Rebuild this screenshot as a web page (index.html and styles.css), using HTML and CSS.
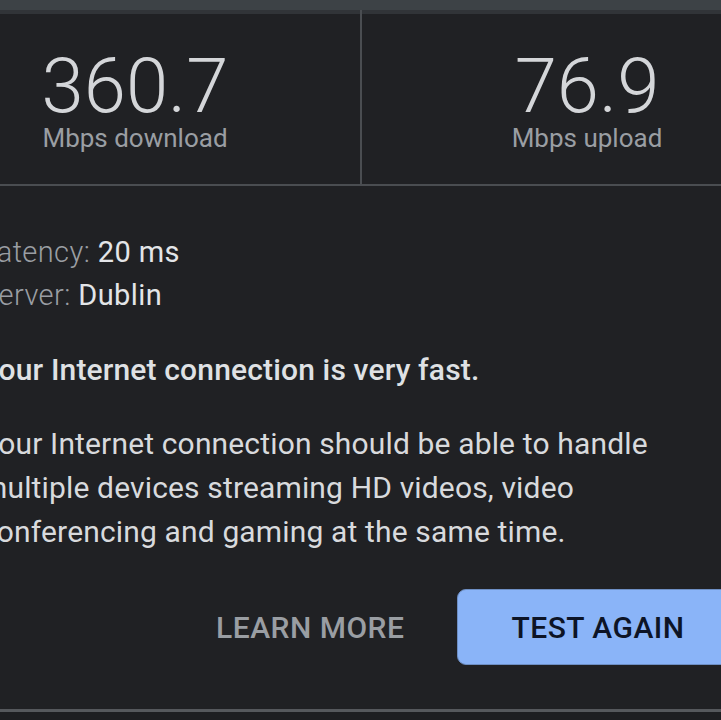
FILE: index.html
```html
<!DOCTYPE html>
<html lang="en">
<head>
<meta charset="utf-8">
<title>Speed test</title>
<link rel="stylesheet" href="styles.css">
</head>
<body>
<div class="topbar"></div>
<div class="card">
  <div class="stats">
    <div class="stat">
      <div class="value">360.7</div>
      <div class="unit">Mbps download</div>
    </div>
    <div class="stat">
      <div class="value">76.9</div>
      <div class="unit">Mbps upload</div>
    </div>
  </div>
  <div class="details">
    <div class="meta">
      <div class="meta-row"><span class="meta-label">Latency:</span> <span class="meta-value">20 ms</span></div>
      <div class="meta-row"><span class="meta-label">Server:</span> <span class="meta-value">Dublin</span></div>
    </div>
    <p class="headline">Your Internet connection is very fast.</p>
    <p class="desc">Your Internet connection should be able to handle<br>multiple devices streaming HD videos, video<br>conferencing and gaming at the same time.</p>
    <div class="actions">
      <button class="btn-text">LEARN MORE</button>
      <button class="btn-primary">TEST AGAIN</button>
    </div>
  </div>
</div>
</body>
</html>
```
FILE: styles.css
```css
html, body {
  margin: 0;
  padding: 0;
}
body {
  width: 721px;
  height: 720px;
  overflow: hidden;
  background: #1d1e21;
  font-family: Roboto, "Noto Sans", sans-serif;
  color: #d8dadd;
}
.topbar {
  height: 10px;
  background: #3d4246;
}
.card {
  margin-left: -90px;
  width: 902px;
  background: #202124;
  border-bottom: 3px solid #55585c;
}
.stats {
  display: grid;
  grid-template-columns: 450px 450px;
  column-gap: 2px;
  background: #4a4d51;
  border-bottom: 2px solid #4a4d51;
}
.stat {
  background: #202124;
  border-top: 4px solid #313438;
  padding: 34px 0 29px;
  text-align: center;
}
.value {
  font-size: 76px;
  line-height: 76px;
  font-weight: 300;
  color: #d4d6d9;
}
.unit {
  margin-top: -3px;
  font-size: 26px;
  line-height: 34px;
  font-weight: 400;
  color: #9a9ea3;
}
.details {
  padding: 45px 0 44px 71px;
}
.meta-row {
  font-size: 29px;
  line-height: 43px;
  letter-spacing: 0.4px;
}
.meta-label {
  font-weight: 300;
  color: #9a9ea3;
}
.meta-value {
  color: #e3e5e8;
}
.headline {
  margin: 31px 0 0;
  font-size: 30px;
  line-height: 43px;
  font-weight: 500;
  letter-spacing: 0.15px;
  color: #dfe1e4;
}
.desc {
  margin: 31px 0 0;
  font-size: 30px;
  line-height: 44px;
  font-weight: 400;
  letter-spacing: 0.15px;
  color: #d8dadd;
}
.actions {
  margin-top: 35px;
  display: flex;
  align-items: center;
  padding-left: 235px;
  gap: 53px;
}
.btn-text {
  background: none;
  border: 0;
  padding: 0;
  white-space: nowrap;
  font-family: inherit;
  font-size: 30px;
  font-weight: 500;
  letter-spacing: 0.5px;
  color: #9a9ea3;
}
.btn-primary {
  flex: none;
  height: 76px;
  width: 300px;
  box-sizing: border-box;
  padding: 0 0 0 53px;
  text-align: left;
  white-space: nowrap;
  background: #8ab4f8;
  border: 1px solid #6e8fc4;
  border-radius: 9px;
  font-family: inherit;
  font-size: 30px;
  font-weight: 500;
  letter-spacing: 0.5px;
  color: #0d1426;
}
```
